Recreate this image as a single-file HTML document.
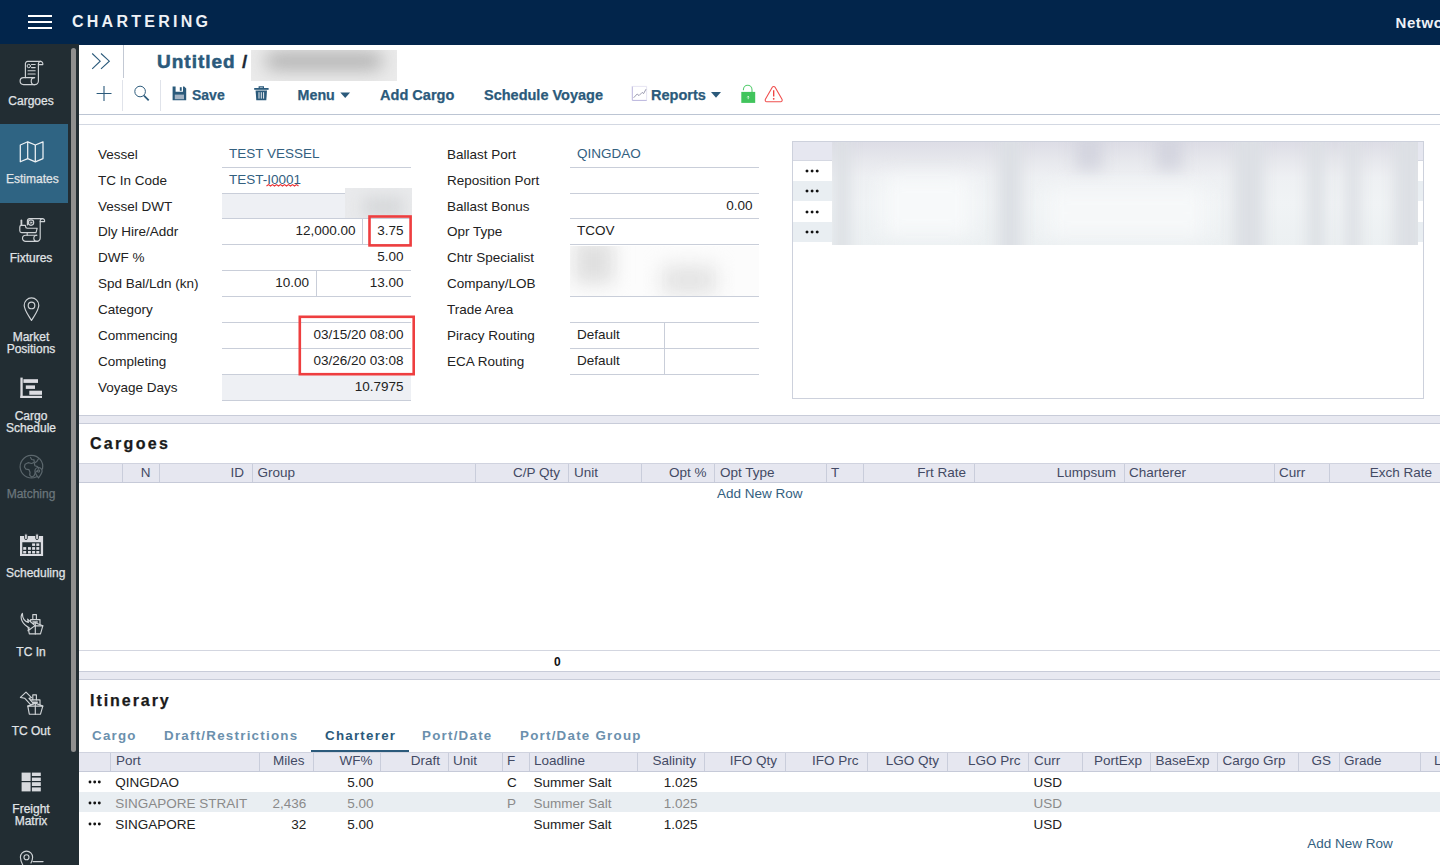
<!DOCTYPE html><html lang="en"><head><meta charset="utf-8"><title>Chartering</title><style>
*{box-sizing:border-box;margin:0;padding:0}
html,body{width:1440px;height:865px;overflow:hidden;background:#fff}
body{font-family:"Liberation Sans",sans-serif;font-size:13.5px;color:#222;position:relative}
.a{position:absolute;white-space:nowrap}
.t{position:absolute;white-space:nowrap;line-height:16px;height:16px}
.r{text-align:right}
.hd{background:#02254b}
.sb{background:#222d33}
.sbl{position:absolute;text-align:center;font-size:12px;line-height:12px}
.sbl span{display:block;white-space:nowrap}
.tb{position:absolute;font-weight:bold;font-size:15px;color:#2b5a7b;line-height:18px;white-space:nowrap;-webkit-text-stroke:0.25px #2b5a7b}
.lbl{color:#222}
.blue{color:#33607f}
.ul{position:absolute;height:1px;background:#c9ced9}
.vl{position:absolute;width:1px;background:#c9ced9}
.th{position:absolute;top:0;height:19px;line-height:18px;color:#444;white-space:nowrap}
.h2{position:absolute;font-weight:bold;font-size:17.5px;letter-spacing:1.1px;color:#1a1a1a;line-height:20px;white-space:nowrap}
.tab{position:absolute;font-weight:bold;font-size:14px;letter-spacing:1px;color:#6289a8;line-height:16px;white-space:nowrap}
.dots{position:absolute;font-weight:bold;font-size:13px;letter-spacing:0px;color:#111;line-height:16px}
.gray{color:#8a8a8a}
</style></head><body>
<div class="a hd" style="left:0;top:0;width:1440px;height:44.800px"></div>
<div class="a" style="left:28px;top:15px;width:24px;height:2px;background:#fff"></div>
<div class="a" style="left:28px;top:21px;width:24px;height:2px;background:#fff"></div>
<div class="a" style="left:28px;top:27px;width:24px;height:2px;background:#fff"></div>
<div class="a" style="left:72px;top:13px;font-weight:bold;font-size:16px;letter-spacing:3.25px;color:#eef1f6;line-height:18px">CHARTERING</div>
<div class="a" style="left:1395.500px;top:13.500px;font-weight:bold;font-size:15px;letter-spacing:0.6px;color:#eef1f6;line-height:18px">Network</div>
<div class="a sb" style="left:0;top:44px;width:79px;height:821px"></div>
<div class="a" style="left:0;top:124px;width:68px;height:79px;background:#2f6483"></div>
<div class="a" style="left:71px;top:48px;width:5.200px;height:704px;background:#8f8f8f;border-radius:2.600px"></div>
<div class="sbl" style="top:95px;left:6px;width:50px;color:#e0e4e7;-webkit-text-stroke:0.25px #e0e4e7"><span>Cargoes</span></div>
<div class="sbl" style="top:173px;left:6px;width:50px;color:#e0e4e7;-webkit-text-stroke:0.25px #e0e4e7"><span>Estimates</span></div>
<div class="sbl" style="top:252px;left:6px;width:50px;color:#e0e4e7;-webkit-text-stroke:0.25px #e0e4e7"><span>Fixtures</span></div>
<div class="sbl" style="top:331px;left:6px;width:50px;color:#e0e4e7;-webkit-text-stroke:0.25px #e0e4e7"><span>Market</span><span>Positions</span></div>
<div class="sbl" style="top:410px;left:6px;width:50px;color:#e0e4e7;-webkit-text-stroke:0.25px #e0e4e7"><span>Cargo</span><span>Schedule</span></div>
<div class="sbl" style="top:488px;left:6px;width:50px;color:#6b767c;-webkit-text-stroke:0.25px #6b767c"><span>Matching</span></div>
<div class="sbl" style="top:567px;left:6px;width:50px;color:#e0e4e7;-webkit-text-stroke:0.25px #e0e4e7"><span>Scheduling</span></div>
<div class="sbl" style="top:646px;left:6px;width:50px;color:#e0e4e7;-webkit-text-stroke:0.25px #e0e4e7"><span>TC In</span></div>
<div class="sbl" style="top:725px;left:6px;width:50px;color:#e0e4e7;-webkit-text-stroke:0.25px #e0e4e7"><span>TC Out</span></div>
<div class="sbl" style="top:803px;left:6px;width:50px;color:#e0e4e7;-webkit-text-stroke:0.25px #e0e4e7"><span>Freight</span><span>Matrix</span></div>
<svg class="a" style="left:16px;top:56px" width="32" height="32" viewBox="16 56 32 32" fill="none" ><g stroke="#cfd3d6" stroke-width="1.15" stroke-linecap="round" stroke-linejoin="round">
<path d="M25.4 77.6V63.6a2.2 2.2 0 0 1 2.2-2.2H40.6a2.2 2.2 0 0 1 2.2 2.2v1H38.4"/>
<path d="M40.6 61.4a2.2 2.2 0 0 0-2.2 2.2V81a3.6 3.6 0 0 1-3.6 3.6H23.6a3.5 3.5 0 0 1 0-7H34.6"/>
<path d="M34.8 84.6a3.5 3.5 0 0 1-0.2-7"/>
<path d="M28 70.8h7.2M28 74h7.2M31.5 64.5h3.7M31.5 67.6h3.7" stroke-width="1.1"/>
<circle cx="28.8" cy="66" r="1.7" stroke-width="1"/>
</g></svg>
<svg class="a" style="left:16px;top:136px" width="32" height="32" viewBox="16 136 32 32" fill="none" ><g stroke="#eef2f5" stroke-width="1.25" stroke-linejoin="round">
<path d="M20.3 145 27.7 141.8 35.3 145 43 141.8V158.6L35.3 161.8 27.7 158.6 20.3 161.8Z"/><path d="M27.7 141.8V158.6M35.3 145V161.8"/></g></svg>
<svg class="a" style="left:16px;top:212px" width="32" height="34" viewBox="16 212 32 34" fill="none" ><g stroke="#cfd3d6" stroke-width="1.15" stroke-linecap="round" stroke-linejoin="round">
<path d="M27.4 225V220.8a2.2 2.2 0 0 1 2.2-2.2H42.4a2.2 2.2 0 0 1 2.2 2.2v0.8H40.2"/>
<path d="M42.4 218.6a2.2 2.2 0 0 0-2.2 2.2V238a3.3 3.3 0 0 1-3.3 3.4H25.6a3.1 3.1 0 0 1 0-6.2H36.6"/>
<path d="M37 241.4a3.1 3.1 0 0 1-0.2-6.2"/>
<path d="M27.2 235.2v-2.6"/>
<path d="M25.4 225.4H21.4a1.6 1.6 0 0 0-1.6 1.6v3.8a1.8 1.8 0 0 0 1.8 1.8H36l1.2-4.4H27.2a1.6 1.6 0 0 1-1.6-1.6z"/>
<path d="M21.4 225v-4.6" stroke-width="1.8"/>
<circle cx="31" cy="222.6" r="2.7"/><circle cx="31" cy="222.6" r="0.8" stroke-width="0.9"/>
</g></svg>
<svg class="a" style="left:16px;top:292px" width="32" height="32" viewBox="16 292 32 32" fill="none" ><g stroke="#cfd3d6" stroke-width="1.15" stroke-linecap="round" stroke-linejoin="round"><path d="M31.5 320.4C28 314.6 24.2 310 24.2 305.2a7.3 7.3 0 0 1 14.6 0C38.800 310 35 314.600 31.5 320.4Z"/><circle cx="31.5" cy="305.400" r="3.3"/></g></svg>
<svg class="a" style="left:16px;top:372px" width="32" height="32" viewBox="16 372 32 32" fill="none" ><g fill="#dcdde2"><rect x="20.4" y="377.600" width="2.3" height="20.4"/><rect x="20.4" y="395.800" width="21.6" height="2.2"/>
<rect x="23.4" y="379.200" width="14.6" height="3.7"/><rect x="25.800" y="385.400" width="9.2" height="3.5"/><rect x="29.300" y="390.700" width="12.7" height="4.1"/></g></svg>
<svg class="a" style="left:16px;top:452px" width="32" height="32" viewBox="16 452 32 32" fill="none" ><g stroke="#5c676d" stroke-width="1.2" stroke-linecap="round" stroke-linejoin="round">
<path d="M36.600 476.700A11.300 11.300 0 1 1 42.500 469"/>
<path d="M30.500 457.500l1.200 2 2.300 0.400 0.300 2.300-2.600 1.300-3.600-0.800-3 1.500-0.700 2.800 1.600 2.200 3 0.500 1 2.500-0.300 3 2 2 2.400-1.400 1.200-3.200 2-1.800"/>
<path d="M38.500 458.800l-1.800 2.800-2.400 1.600 0.600 2.600 2.600 0.800 1.200 1.800"/>
<path d="M38.500 478c-2-2.800-3.600-4.800-3.600-6.900a3.600 3.600 0 0 1 7.200 0c0 2.100-1.600 4.100-3.600 6.900Z"/><circle cx="38.500" cy="471" r="1.100"/></g></svg>
<svg class="a" style="left:16px;top:530px" width="32" height="30" viewBox="16 530 32 30" fill="none" ><path fill="#dcdde2" fill-rule="evenodd" d="M20 536H43.100V556H20ZM22.300 542.200V554H40.800V542.200Z"/><rect fill="#dcdde2" x="32.1" y="543.4" width="3.0" height="2.5"/><rect fill="#dcdde2" x="36.3" y="543.4" width="3.0" height="2.5"/><rect fill="#dcdde2" x="23.2" y="547.1" width="3.0" height="2.7"/><rect fill="#dcdde2" x="28" y="547.1" width="2.9" height="2.7"/><rect fill="#dcdde2" x="32.1" y="547.1" width="3.0" height="2.7"/><rect fill="#dcdde2" x="36.3" y="547.1" width="3.0" height="2.7"/><rect fill="#dcdde2" x="23.2" y="551" width="3.0" height="2.5"/><rect fill="#dcdde2" x="28" y="551" width="2.9" height="2.5"/><rect fill="#dcdde2" x="32.1" y="551" width="3.0" height="2.5"/><rect fill="#dcdde2" x="36.3" y="551" width="3.0" height="2.5"/><rect x="24.600" y="533.800" width="2.700" height="5.800" rx="1.300" fill="#dcdde2" stroke="#222d33" stroke-width="0.900"/><rect x="35.700" y="533.800" width="2.700" height="5.800" rx="1.300" fill="#dcdde2" stroke="#222d33" stroke-width="0.900"/></svg>
<svg class="a" style="left:16px;top:608px" width="32" height="32" viewBox="16 608 32 32" fill="none" ><g stroke="#cfd3d6" stroke-width="1.15" stroke-linecap="round" stroke-linejoin="round"><path d="M27.800 625.8H42.800L40.500 633.9H29.300Z"/><path d="M35.300 622.8V633.9"/><path d="M27.800 625.8L35.300 622.8L42.800 625.8"/>
<path d="M30.600 624.6V619.6H40V624.6"/><path d="M32.800 619.6V614.6H36.400V619.6"/><path d="M33 622h4.200" stroke-width="1.600"/>
<path d="M22.400 613.400C19.400 617.500 22 624 29.200 627.700L28 630.800 35 625.600 27.600 619.200 28.400 622.400C25 621.400 22.400 618.500 22.400 613.400Z" fill="#222d33"/></g></svg>
<svg class="a" style="left:16px;top:687px" width="32" height="32" viewBox="16 687 32 32" fill="none" ><g stroke="#cfd3d6" stroke-width="1.15" stroke-linecap="round" stroke-linejoin="round"><path d="M27.800 706.0999999999999H42.800L40.500 714.1999999999999H29.300Z"/><path d="M35.300 703.0999999999999V714.1999999999999"/><path d="M27.800 706.0999999999999L35.300 703.0999999999999L42.800 706.0999999999999"/>
<path d="M30.600 704.9V699.9H40V704.9"/><path d="M32.800 699.9V694.9H36.400V699.9"/><path d="M33 702.3h4.200" stroke-width="1.600"/>
<path d="M20.400 697.400 26 692.200 31.500 697.600 29 698.400 33.500 703.600 30.800 704.800 24.600 698.200Z" fill="#222d33"/></g></svg>
<svg class="a" style="left:16px;top:766px" width="32" height="32" viewBox="16 766 32 32" fill="none" ><g fill="#d8dade"><rect x="21.600" y="772.600" width="9" height="8.400"/><rect x="21.600" y="782.200" width="9" height="9.200"/>
<rect x="31.900" y="772.600" width="8.900" height="3.400"/><rect x="31.900" y="777.600" width="8.900" height="3.400"/><rect x="31.900" y="782.200" width="8.900" height="3.800"/><rect x="31.900" y="787.400" width="8.900" height="4"/></g></svg>
<svg class="a" style="left:16px;top:846px" width="32" height="19" viewBox="16 846 32 19" fill="none" ><g stroke="#cfd3d6" stroke-width="1.15" stroke-linecap="round" stroke-linejoin="round"><path d="M26.500 872C23.500 866.500 20.400 862 20.400 857.200a6.100 6.100 0 0 1 12.200 0C32.600 859 32 861 31 863"/><circle cx="26.500" cy="857.200" r="2.500"/><path d="M33 861.600H43" stroke-width="1.400"/></g></svg>
<svg class="a" style="left:88px;top:50px" width="26" height="24" viewBox="88 50 26 24" fill="none" ><path d="M92.200 53.500 100.200 61.200 92.200 68.900M101 53.500 109.300 61.200 101 68.900" stroke="#2b5a7b" stroke-width="1.100"/></svg>
<div class="vl" style="left:123px;top:45px;height:33px;background:#c3c9d4"></div>
<div class="a" style="left:157px;top:50.800px;font-weight:bold;font-size:19px;letter-spacing:1.0px;color:#2b5a7b;-webkit-text-stroke:0.55px #2b5a7b;line-height:22px">Untitled <span style="color:#1d2a36;-webkit-text-stroke:0.3px #1d2a36;letter-spacing:0">/</span></div>
<div class="a" style="left:251px;top:50px;width:146px;height:31px;overflow:hidden;background:#ebebeb"><div style="position:absolute;left:14px;top:3px;width:118px;height:16px;background:#aaa;filter:blur(9px);border-radius:8px"></div></div>
<svg class="a" style="left:94px;top:84px" width="20" height="20" viewBox="94 84 20 20" fill="none" ><path d="M104 86V101M96.600 93.500H111.500" stroke="#2b5a7b" stroke-width="1.100"/></svg>
<div class="vl" style="left:122px;top:80px;height:31px;background:#e0e3ea"></div>
<svg class="a" style="left:132px;top:84px" width="20" height="20" viewBox="132 84 20 20" fill="none" ><circle cx="140.100" cy="91.500" r="5.300" stroke="#2b5a7b" stroke-width="1"/><path d="M144 95.600 148.700 100.400" stroke="#2b5a7b" stroke-width="1.700"/></svg>
<div class="vl" style="left:160px;top:80px;height:31px;background:#e0e3ea"></div>
<svg class="a" style="left:170px;top:84px" width="20" height="20" viewBox="170 84 20 20" fill="none" ><path fill="#2b5a7b" d="M172.600 86.600H175.600V91.800H183V86.600H184.200L186.200 88.600V100.200H172.600Z"/><rect x="179.800" y="87.200" width="1.900" height="3.600" fill="#2b5a7b"/>
<rect x="174.800" y="94.600" width="9.200" height="4.600" fill="#a3b3c4"/></svg>
<div class="tb" style="left:192px;top:86px;font-size:14px">Save</div>
<svg class="a" style="left:252px;top:84px" width="20" height="20" viewBox="252 84 20 20" fill="none" ><g fill="#2b5a7b"><rect x="254.200" y="88" width="14.400" height="1.800"/><path d="M258.600 88V86.300H264V88H262.800V87.400H259.800V88Z"/>
<path d="M255.600 90.600H267L266.300 100.200H256.300Z"/></g><path d="M259 92.200V98.600M261.300 92.200V98.600M263.600 92.200V98.600" stroke="#fff" stroke-width="0.900"/></svg>
<div class="tb" style="left:297.600px;top:86px;font-size:14.250px">Menu</div>
<svg class="a" style="left:338px;top:90px" width="14" height="10" viewBox="338 90 14 10" fill="none" ><path d="M340.300 92.600H350.100L345.200 98.100Z" fill="#2b5a7b"/></svg>
<div class="tb" style="left:380px;top:86px;font-size:14.550px">Add Cargo</div>
<div class="tb" style="left:484px;top:86px;font-size:14.500px">Schedule Voyage</div>
<svg class="a" style="left:630px;top:84px" width="20" height="20" viewBox="630 84 20 20" fill="none" ><path d="M632.300 86.200V100.400H646.800" stroke="#b9b4dd" stroke-width="1"/><path d="M646.600 86.400V100.200M632.300 86.400H646.600" stroke="#e3e1f1" stroke-width="0.900"/>
<path d="M633.600 97.800 637.200 94 639 95.600 642.200 92.400 643.600 93.600 646 89.200" stroke="#8e8ea6" stroke-width="0.900"/></svg>
<div class="tb" style="left:651px;top:86px;font-size:14.550px">Reports</div>
<svg class="a" style="left:709px;top:90px" width="14" height="10" viewBox="709 90 14 10" fill="none" ><path d="M711 92.100H721L716 97.800Z" fill="#2b5a7b"/></svg>
<svg class="a" style="left:738px;top:83px" width="20" height="22" viewBox="738 83 20 22" fill="none" ><path d="M743.400 90.300V89.800a4.300 4.500 0 0 1 8.600 0V92" stroke="#55cc6e" stroke-width="1.100"/><rect x="741.300" y="91.900" width="13.900" height="11" fill="#41c45c"/>
<path d="M748.200 99.200V96.400M747.200 97.300 748.200 96.200 749.200 97.300" stroke="#fff" stroke-width="0.700"/></svg>
<svg class="a" style="left:762px;top:83px" width="24" height="22" viewBox="762 83 24 22" fill="none" ><path d="M772.300 87.300a1.600 1.600 0 0 1 2.800 0L782 99.300a1.600 1.600 0 0 1-1.400 2.400H766.800a1.600 1.600 0 0 1-1.400-2.400Z" stroke="#f0504f" stroke-width="1.100"/>
<path d="M773.700 90.200V96.400" stroke="#ee3b3a" stroke-width="1.300"/><circle cx="773.700" cy="98.800" r="0.900" fill="#ee3b3a"/></svg>
<div class="ul" style="left:79px;top:114px;width:1361px;background:#bcc5d3"></div>
<div class="ul" style="left:79px;top:124px;width:1361px;background:#d3d8e2"></div>
<div class="t lbl" style="left:98px;top:146.1px;transform:translateY(0.5px);">Vessel</div>
<div class="t lbl" style="left:98px;top:172.1px;transform:translateY(0.5px);">TC In Code</div>
<div class="t lbl" style="left:98px;top:198.1px;transform:translateY(0.5px);">Vessel DWT</div>
<div class="t lbl" style="left:98px;top:223.1px;transform:translateY(0.5px);">Dly Hire/Addr</div>
<div class="t lbl" style="left:98px;top:249.1px;transform:translateY(0.5px);">DWF %</div>
<div class="t lbl" style="left:98px;top:275.1px;transform:translateY(0.5px);">Spd Bal/Ldn (kn)</div>
<div class="t lbl" style="left:98px;top:301.1px;transform:translateY(0.5px);">Category</div>
<div class="t lbl" style="left:98px;top:327.1px;transform:translateY(0.5px);">Commencing</div>
<div class="t lbl" style="left:98px;top:353.1px;transform:translateY(0.5px);">Completing</div>
<div class="t lbl" style="left:98px;top:379.1px;transform:translateY(0.5px);">Voyage Days</div>
<div class="a" style="left:222px;top:194px;width:189px;height:24px;background:#eef0f4"></div>
<div class="a" style="left:222px;top:375px;width:189px;height:25px;background:#eef0f4"></div>
<div class="ul" style="left:222px;top:167px;width:189px"></div>
<div class="ul" style="left:222px;top:193px;width:189px"></div>
<div class="ul" style="left:222px;top:218px;width:189px"></div>
<div class="ul" style="left:222px;top:244px;width:189px"></div>
<div class="ul" style="left:222px;top:270px;width:189px"></div>
<div class="ul" style="left:222px;top:296px;width:189px"></div>
<div class="ul" style="left:222px;top:322px;width:189px"></div>
<div class="ul" style="left:222px;top:348px;width:189px"></div>
<div class="ul" style="left:222px;top:374px;width:189px"></div>
<div class="ul" style="left:222px;top:400px;width:189px"></div>
<div class="vl" style="left:362px;top:219px;height:25px"></div>
<div class="vl" style="left:316px;top:271px;height:25px"></div>
<div class="t blue" style="left:229px;top:145.4px;transform:translateY(0.5px);">TEST VESSEL</div>
<div class="t blue" style="left:229px;top:171.4px;transform:translateY(0.5px);">TEST-I0001</div>
<svg class="a" style="left:264px;top:182px" width="40" height="6" viewBox="264 182 40 6"><path d="M266.5 186.0 L268.5 184.6 L270.5 186.0 L272.5 184.6 L274.5 186.0 L276.5 184.6 L278.5 186.0 L280.5 184.6 L282.5 186.0 L284.5 184.6 L286.5 186.0 L288.5 184.6 L290.5 186.0 L292.5 184.6 L294.5 186.0 L296.5 184.6 L298.5 186.0" fill="none" stroke="#ea2f31" stroke-width="1.100"/></svg>
<div class="t r " style="right:1084.5px;top:222.4px;transform:translateY(0.5px);">12,000.00</div>
<div class="t r " style="right:1036.5px;top:222.4px;transform:translateY(0.5px);">3.75</div>
<div class="t r " style="right:1036.5px;top:248.4px;transform:translateY(0.5px);">5.00</div>
<div class="t r " style="right:1131.0px;top:274.4px;transform:translateY(0.5px);">10.00</div>
<div class="t r " style="right:1036.5px;top:274.4px;transform:translateY(0.5px);">13.00</div>
<div class="t r " style="right:1036.5px;top:326.4px;transform:translateY(0.5px);">03/15/20 08:00</div>
<div class="t r " style="right:1036.5px;top:352.4px;transform:translateY(0.5px);">03/26/20 03:08</div>
<div class="t r " style="right:1036.5px;top:378.4px;transform:translateY(0.5px);">10.7975</div>
<div class="a" style="left:345px;top:188px;width:67px;height:30px;overflow:hidden;background:#e9eaec"><div style="position:absolute;left:18px;top:10px;width:40px;height:18px;background:#d4d6d8;filter:blur(8px)"></div></div>
<svg class="a" style="left:360px;top:210px" width="60" height="44" viewBox="360 210 60 44"><rect x="369.500" y="216.500" width="41.100" height="28.900" fill="none" stroke="#ee3e3f" stroke-width="2.600"/></svg>
<svg class="a" style="left:290px;top:310px" width="130" height="72" viewBox="290 310 130 72"><rect x="299.800" y="316.800" width="113.900" height="57.400" fill="none" stroke="#ee3e3f" stroke-width="2.600"/></svg>
<div class="t lbl" style="left:447px;top:146.1px;transform:translateY(0.5px);">Ballast Port</div>
<div class="t lbl" style="left:447px;top:172.1px;transform:translateY(0.5px);">Reposition Port</div>
<div class="t lbl" style="left:447px;top:198.1px;transform:translateY(0.5px);">Ballast Bonus</div>
<div class="t lbl" style="left:447px;top:223.1px;transform:translateY(0.5px);">Opr Type</div>
<div class="t lbl" style="left:447px;top:249.1px;transform:translateY(0.5px);">Chtr Specialist</div>
<div class="t lbl" style="left:447px;top:275.1px;transform:translateY(0.5px);">Company/LOB</div>
<div class="t lbl" style="left:447px;top:301.1px;transform:translateY(0.5px);">Trade Area</div>
<div class="t lbl" style="left:447px;top:327.1px;transform:translateY(0.5px);">Piracy Routing</div>
<div class="t lbl" style="left:447px;top:353.1px;transform:translateY(0.5px);">ECA Routing</div>
<div class="ul" style="left:570px;top:167px;width:189px"></div>
<div class="ul" style="left:570px;top:193px;width:189px"></div>
<div class="ul" style="left:570px;top:218px;width:189px"></div>
<div class="ul" style="left:570px;top:244px;width:189px"></div>
<div class="ul" style="left:570px;top:296px;width:189px"></div>
<div class="ul" style="left:570px;top:322px;width:189px"></div>
<div class="ul" style="left:570px;top:348px;width:189px"></div>
<div class="ul" style="left:570px;top:374px;width:189px"></div>
<div class="vl" style="left:664px;top:323px;height:52px"></div>
<div class="t blue" style="left:577px;top:145.4px;transform:translateY(0.5px);">QINGDAO</div>
<div class="t r " style="right:687.5px;top:197.4px;transform:translateY(0.5px);">0.00</div>
<div class="t " style="left:577px;top:222.4px;transform:translateY(0.5px);">TCOV</div>
<div class="t " style="left:577px;top:326.4px;transform:translateY(0.5px);">Default</div>
<div class="t " style="left:577px;top:352.4px;transform:translateY(0.5px);">Default</div>
<div class="a" style="left:570px;top:246px;width:189px;height:50px;overflow:hidden;background:#fcfcfc">
<div style="position:absolute;left:4px;top:-6px;width:40px;height:44px;background:#e0e0e0;filter:blur(9px)"></div>
<div style="position:absolute;left:92px;top:20px;width:54px;height:28px;background:#e2e2e2;filter:blur(10px)"></div></div>
<div class="a" style="left:792px;top:141px;width:632px;height:258px;border:1px solid #cdd1dc;background:#fff"></div>
<div class="a" style="left:793px;top:142px;width:630px;height:19px;background:#e6e7f0;border-bottom:1px solid #d5d8e2"></div>
<div class="a" style="left:793px;top:181px;width:630px;height:20px;background:#e9eef2"></div>
<div class="a" style="left:793px;top:222px;width:630px;height:20px;background:#e9eef2"></div>
<svg class="a" style="left:804.4px;top:168.1px" width="16.2" height="6" viewBox="0 0 16.2 6"><circle cx="3" cy="3" r="1.5" fill="#111"/><circle cx="8.1" cy="3" r="1.5" fill="#111"/><circle cx="13.2" cy="3" r="1.5" fill="#111"/></svg>
<svg class="a" style="left:804.4px;top:188.3px" width="16.2" height="6" viewBox="0 0 16.2 6"><circle cx="3" cy="3" r="1.5" fill="#111"/><circle cx="8.1" cy="3" r="1.5" fill="#111"/><circle cx="13.2" cy="3" r="1.5" fill="#111"/></svg>
<svg class="a" style="left:804.4px;top:209.1px" width="16.2" height="6" viewBox="0 0 16.2 6"><circle cx="3" cy="3" r="1.5" fill="#111"/><circle cx="8.1" cy="3" r="1.5" fill="#111"/><circle cx="13.2" cy="3" r="1.5" fill="#111"/></svg>
<svg class="a" style="left:804.4px;top:229.1px" width="16.2" height="6" viewBox="0 0 16.2 6"><circle cx="3" cy="3" r="1.5" fill="#111"/><circle cx="8.1" cy="3" r="1.5" fill="#111"/><circle cx="13.2" cy="3" r="1.5" fill="#111"/></svg>
<div class="a" style="left:832px;top:142px;width:586px;height:103px;overflow:hidden;background:linear-gradient(#dddde6 0,#e6e7ec 16%,#eef0f3 34%,#f0f3f5 60%,#ecf0f2 100%)">
<div style="position:absolute;left:2px;top:-12px;width:16px;height:130px;background:#dcdfe4;filter:blur(7px)"></div>
<div style="position:absolute;left:166px;top:-12px;width:24px;height:130px;background:#dcdfe4;filter:blur(7px)"></div>
<div style="position:absolute;left:402px;top:-12px;width:30px;height:130px;background:#dcdfe4;filter:blur(7px)"></div>
<div style="position:absolute;left:476px;top:-12px;width:16px;height:130px;background:#dcdfe4;filter:blur(7px)"></div>
<div style="position:absolute;left:514px;top:-12px;width:14px;height:130px;background:#dcdfe4;filter:blur(7px)"></div>
<div style="position:absolute;left:562px;top:-12px;width:30px;height:130px;background:#dcdfe4;filter:blur(7px)"></div>
<div style="position:absolute;left:244px;top:-12px;width:26px;height:40px;background:#d3d4de;filter:blur(8px)"></div>
<div style="position:absolute;left:324px;top:-12px;width:26px;height:40px;background:#d3d4de;filter:blur(8px)"></div>
<div style="position:absolute;left:50px;top:34px;width:90px;height:60px;background:#f7f9fa;filter:blur(10px)"></div>
<div style="position:absolute;left:215px;top:46px;width:160px;height:50px;background:#f6f8f9;filter:blur(10px)"></div>
</div>
<div class="a" style="left:79px;top:415px;width:1361px;height:9px;background:#e8e9f1;border-top:1px solid #c8ccd9;border-bottom:1px solid #c8ccd9"></div>
<div class="h2" style="left:90px;top:434px;font-size:16px;letter-spacing:2.300px;-webkit-text-stroke:0.25px #1a1a1a">Cargoes</div>
<div class="a" style="left:79px;top:463px;width:1361px;height:20px;background:#e6e7f0;border-top:1px solid #d0d3df;border-bottom:1px solid #c6cad8"></div>
<div class="vl" style="left:122px;top:464px;height:18px;background:#c9cddb"></div>
<div class="vl" style="left:159px;top:464px;height:18px;background:#c9cddb"></div>
<div class="vl" style="left:252px;top:464px;height:18px;background:#c9cddb"></div>
<div class="vl" style="left:475px;top:464px;height:18px;background:#c9cddb"></div>
<div class="vl" style="left:568px;top:464px;height:18px;background:#c9cddb"></div>
<div class="vl" style="left:641px;top:464px;height:18px;background:#c9cddb"></div>
<div class="vl" style="left:714px;top:464px;height:18px;background:#c9cddb"></div>
<div class="vl" style="left:826px;top:464px;height:18px;background:#c9cddb"></div>
<div class="vl" style="left:863px;top:464px;height:18px;background:#c9cddb"></div>
<div class="vl" style="left:974px;top:464px;height:18px;background:#c9cddb"></div>
<div class="vl" style="left:1124px;top:464px;height:18px;background:#c9cddb"></div>
<div class="vl" style="left:1274px;top:464px;height:18px;background:#c9cddb"></div>
<div class="vl" style="left:1329px;top:464px;height:18px;background:#c9cddb"></div>
<div class="t r " style="right:1289.5px;top:464px;transform:translateY(0.60px);color:#434a64">N</div>
<div class="t r " style="right:1196.0px;top:464px;transform:translateY(0.60px);color:#434a64">ID</div>
<div class="t " style="left:257.5px;top:464px;transform:translateY(0.60px);color:#434a64">Group</div>
<div class="t r " style="right:880.0px;top:464px;transform:translateY(0.60px);color:#434a64">C/P Qty</div>
<div class="t " style="left:574px;top:464px;transform:translateY(0.60px);color:#434a64">Unit</div>
<div class="t r " style="right:733.5px;top:464px;transform:translateY(0.60px);color:#434a64">Opt %</div>
<div class="t " style="left:720px;top:464px;transform:translateY(0.60px);color:#434a64">Opt Type</div>
<div class="t " style="left:831px;top:464px;transform:translateY(0.60px);color:#434a64">T</div>
<div class="t r " style="right:474.0px;top:464px;transform:translateY(0.60px);color:#434a64">Frt Rate</div>
<div class="t r " style="right:324.0px;top:464px;transform:translateY(0.60px);color:#434a64">Lumpsum</div>
<div class="t " style="left:1129px;top:464px;transform:translateY(0.60px);color:#434a64">Charterer</div>
<div class="t " style="left:1279px;top:464px;transform:translateY(0.60px);color:#434a64">Curr</div>
<div class="t r " style="right:8.0px;top:464px;transform:translateY(0.60px);color:#434a64">Exch Rate</div>
<div class="t blue" style="left:717px;top:485px;transform:translateY(0.60px);">Add New Row</div>
<div class="ul" style="left:79px;top:650px;width:1361px;background:#d3d6e0"></div>
<div class="t" style="left:554px;top:654px;font-weight:bold;font-size:12px;color:#111">0</div>
<div class="a" style="left:79px;top:671px;width:1361px;height:9px;background:#e8e9f1;border-top:1px solid #c8ccd9;border-bottom:1px solid #c8ccd9"></div>
<div class="h2" style="left:90px;top:690.500px;font-size:16px;letter-spacing:1.950px;-webkit-text-stroke:0.25px #1a1a1a">Itinerary</div>
<div class="tab" style="left:92px;top:728px;color:#6b90ad;font-size:13.330px;letter-spacing:1.250px">Cargo</div>
<div class="tab" style="left:164px;top:728px;color:#6b90ad;font-size:13.330px;letter-spacing:1.250px">Draft/Restrictions</div>
<div class="tab" style="left:325px;top:728px;color:#2b5a7b;font-size:13.330px;letter-spacing:1.250px">Charterer</div>
<div class="tab" style="left:422px;top:728px;color:#6b90ad;font-size:13.330px;letter-spacing:1.250px">Port/Date</div>
<div class="tab" style="left:520px;top:728px;color:#6b90ad;font-size:13.330px;letter-spacing:1.250px">Port/Date Group</div>
<div class="a" style="left:79px;top:752px;width:1361px;height:20px;background:#e6e7f0;border-top:1px solid #d0d3df;border-bottom:1px solid #c6cad8"></div>
<div class="vl" style="left:110px;top:753px;height:18px;background:#c9cddb"></div>
<div class="vl" style="left:259px;top:753px;height:18px;background:#c9cddb"></div>
<div class="vl" style="left:313px;top:753px;height:18px;background:#c9cddb"></div>
<div class="vl" style="left:380px;top:753px;height:18px;background:#c9cddb"></div>
<div class="vl" style="left:448px;top:753px;height:18px;background:#c9cddb"></div>
<div class="vl" style="left:502px;top:753px;height:18px;background:#c9cddb"></div>
<div class="vl" style="left:529px;top:753px;height:18px;background:#c9cddb"></div>
<div class="vl" style="left:637px;top:753px;height:18px;background:#c9cddb"></div>
<div class="vl" style="left:704px;top:753px;height:18px;background:#c9cddb"></div>
<div class="vl" style="left:785px;top:753px;height:18px;background:#c9cddb"></div>
<div class="vl" style="left:867px;top:753px;height:18px;background:#c9cddb"></div>
<div class="vl" style="left:947px;top:753px;height:18px;background:#c9cddb"></div>
<div class="vl" style="left:1028px;top:753px;height:18px;background:#c9cddb"></div>
<div class="vl" style="left:1082px;top:753px;height:18px;background:#c9cddb"></div>
<div class="vl" style="left:1150px;top:753px;height:18px;background:#c9cddb"></div>
<div class="vl" style="left:1217px;top:753px;height:18px;background:#c9cddb"></div>
<div class="vl" style="left:1298px;top:753px;height:18px;background:#c9cddb"></div>
<div class="vl" style="left:1339px;top:753px;height:18px;background:#c9cddb"></div>
<div class="vl" style="left:1420px;top:753px;height:18px;background:#c9cddb"></div>
<div class="t " style="left:116px;top:753px;transform:translateY(0.30px);color:#434a64">Port</div>
<div class="t r " style="right:1135.5px;top:753px;transform:translateY(0.30px);color:#434a64">Miles</div>
<div class="t r " style="right:1067.5px;top:753px;transform:translateY(0.30px);color:#434a64">WF%</div>
<div class="t r " style="right:1000.0px;top:753px;transform:translateY(0.30px);color:#434a64">Draft</div>
<div class="t " style="left:453px;top:753px;transform:translateY(0.30px);color:#434a64">Unit</div>
<div class="t " style="left:507px;top:753px;transform:translateY(0.30px);color:#434a64">F</div>
<div class="t " style="left:534px;top:753px;transform:translateY(0.30px);color:#434a64">Loadline</div>
<div class="t r " style="right:744.0px;top:753px;transform:translateY(0.30px);color:#434a64">Salinity</div>
<div class="t r " style="right:663.0px;top:753px;transform:translateY(0.30px);color:#434a64">IFO Qty</div>
<div class="t r " style="right:581.5px;top:753px;transform:translateY(0.30px);color:#434a64">IFO Prc</div>
<div class="t r " style="right:501.0px;top:753px;transform:translateY(0.30px);color:#434a64">LGO Qty</div>
<div class="t r " style="right:419.5px;top:753px;transform:translateY(0.30px);color:#434a64">LGO Prc</div>
<div class="t " style="left:1034px;top:753px;transform:translateY(0.30px);color:#434a64">Curr</div>
<div class="t r " style="right:298.0px;top:753px;transform:translateY(0.30px);color:#434a64">PortExp</div>
<div class="t " style="left:1155.5px;top:753px;transform:translateY(0.30px);color:#434a64">BaseExp</div>
<div class="t " style="left:1222.5px;top:753px;transform:translateY(0.30px);color:#434a64">Cargo Grp</div>
<div class="t r " style="right:109.0px;top:753px;transform:translateY(0.30px);color:#434a64">GS</div>
<div class="t " style="left:1344px;top:753px;transform:translateY(0.30px);color:#434a64">Grade</div>
<div class="t " style="left:1434px;top:753px;transform:translateY(0.30px);color:#434a64">L</div>
<div class="a" style="left:311px;top:749.500px;width:98px;height:2.500px;background:#2b5a7b"></div>
<div class="a" style="left:79px;top:792px;width:1361px;height:20px;background:#e9eef2"></div>
<svg class="a" style="left:86.8px;top:779.1px" width="15.3" height="6" viewBox="0 0 15.3 6"><circle cx="3" cy="3" r="1.45" fill="#111"/><circle cx="7.7" cy="3" r="1.45" fill="#111"/><circle cx="12.3" cy="3" r="1.45" fill="#111"/></svg>
<div class="t " style="left:115.3px;top:775px;transform:translateY(0.20px);">QINGDAO</div>
<div class="t r " style="right:1066.5px;top:775px;transform:translateY(0.20px);">5.00</div>
<div class="t " style="left:507px;top:775px;transform:translateY(0.20px);">C</div>
<div class="t " style="left:533.5px;top:775px;transform:translateY(0.20px);">Summer Salt</div>
<div class="t r " style="right:742.5px;top:775px;transform:translateY(0.20px);">1.025</div>
<div class="t " style="left:1033.5px;top:775px;transform:translateY(0.20px);">USD</div>
<svg class="a" style="left:86.8px;top:799.8px" width="15.3" height="6" viewBox="0 0 15.3 6"><circle cx="3" cy="3" r="1.45" fill="#111"/><circle cx="7.7" cy="3" r="1.45" fill="#111"/><circle cx="12.3" cy="3" r="1.45" fill="#111"/></svg>
<div class="t gray" style="left:115.3px;top:795px;transform:translateY(0.90px);">SINGAPORE STRAIT</div>
<div class="t r gray" style="right:1133.8px;top:795px;transform:translateY(0.90px);">2,436</div>
<div class="t r gray" style="right:1066.5px;top:795px;transform:translateY(0.90px);">5.00</div>
<div class="t gray" style="left:507px;top:795px;transform:translateY(0.90px);">P</div>
<div class="t gray" style="left:533.5px;top:795px;transform:translateY(0.90px);">Summer Salt</div>
<div class="t r gray" style="right:742.5px;top:795px;transform:translateY(0.90px);">1.025</div>
<div class="t gray" style="left:1033.5px;top:795px;transform:translateY(0.90px);">USD</div>
<svg class="a" style="left:86.8px;top:820.5px" width="15.3" height="6" viewBox="0 0 15.3 6"><circle cx="3" cy="3" r="1.45" fill="#111"/><circle cx="7.7" cy="3" r="1.45" fill="#111"/><circle cx="12.3" cy="3" r="1.45" fill="#111"/></svg>
<div class="t " style="left:115.3px;top:816px;transform:translateY(0.60px);">SINGAPORE</div>
<div class="t r " style="right:1133.8px;top:816px;transform:translateY(0.60px);">32</div>
<div class="t r " style="right:1066.5px;top:816px;transform:translateY(0.60px);">5.00</div>
<div class="t " style="left:533.5px;top:816px;transform:translateY(0.60px);">Summer Salt</div>
<div class="t r " style="right:742.5px;top:816px;transform:translateY(0.60px);">1.025</div>
<div class="t " style="left:1033.5px;top:816px;transform:translateY(0.60px);">USD</div>
<div class="t blue" style="left:1307.3px;top:835px;transform:translateY(0.70px);">Add New Row</div>
</body></html>
